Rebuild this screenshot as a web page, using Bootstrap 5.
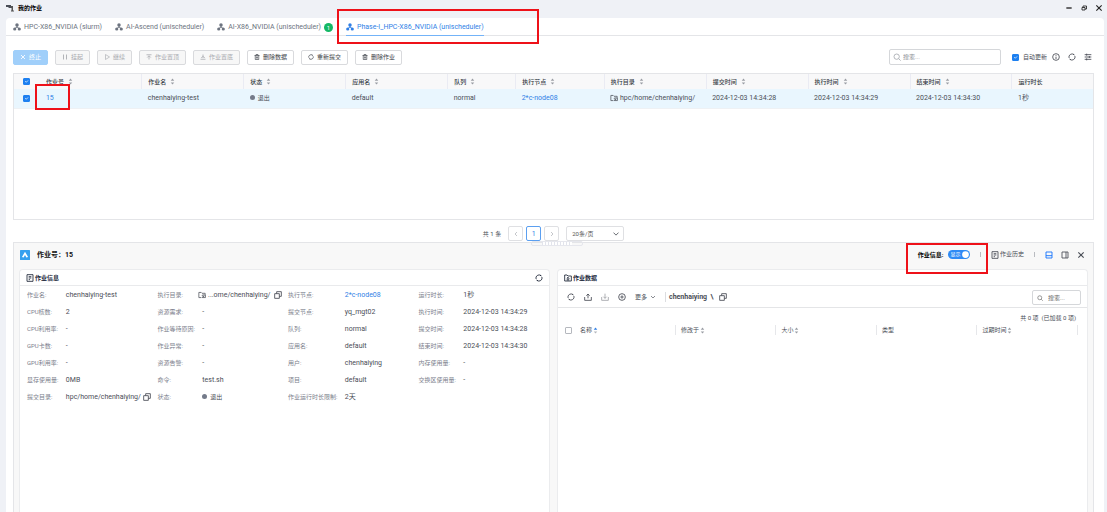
<!DOCTYPE html>
<html lang="zh-CN">
<head>
<meta charset="utf-8">
<meta name="viewport" content="width=device-width, initial-scale=1">
<title>我的作业</title>
<link href="https://cdn.jsdelivr.net/npm/bootstrap@5.3.0/dist/css/bootstrap.min.css" rel="stylesheet">
<style>
:root{--zh:6px;--en:7px;--blue:#2f7fe6;--line:#e4e5e8}
body{background:#eff1f6;font-family:Roboto,"Noto Sans CJK SC",sans-serif;font-size:var(--en);line-height:10px;color:#4a4e57}
button,input,select{font-family:inherit}
svg.ico{width:8px;height:8px;fill:none;stroke:currentColor;stroke-width:1.3;flex:none;display:inline-block;vertical-align:middle}
svg.tiny{width:6px;height:6px}
.zh{font-size:var(--zh)}
a{color:var(--blue);text-decoration:none}
.titlebar{height:18px;padding:0 4px 2px 6px;color:#222}
.titlebar .btn,.plain{padding:0;border:0;line-height:8px;color:inherit;background:none;font-size:var(--zh)}
.shell{margin:0 3px 0 6px;border-radius:4px 4px 0 0;min-height:calc(100vh - 18px)}
.tabs{height:18px;border-bottom:1px solid var(--line);padding-left:7px;gap:13px;flex-wrap:nowrap}
.tabs .nav-link{padding:0;height:18px;display:flex;align-items:center;gap:3px;color:#6d7480;position:relative;white-space:nowrap}
.tabs .nav-link.active{color:var(--blue);border-bottom:1px solid #73b3f8}
.count{background:#14b866;color:#fff;border-radius:50%;width:9px;height:9px;line-height:9px;text-align:center}
.pad{padding:0 10px 0 7px}
.tool{margin-top:13px;gap:7px}
.tool .btn{height:15px;padding:0 6px;border:1px solid #d9dadd;border-radius:2px;font-size:var(--zh);line-height:8px;color:#3b3f47;display:flex;align-items:center;justify-content:center;gap:3px;background:#fff;white-space:nowrap}
.tool .btn.primary{background:#a0cffa;border-color:#a0cffa;color:#fff}
.tool .btn:disabled{opacity:1;background:#f7f7f7;color:#a9abb0}
.tool .btn.primary:disabled{background:#a0cffa;color:#fff}
.acts{margin:0 2px 0 -2px}
.seek{border:1px solid #d5d7da;border-radius:2px;background:#fff;padding:0 3px;gap:2px;color:#a8abb1}
.seek input{border:0;outline:0;padding:0;width:100%;min-width:0;font-size:var(--zh);line-height:10px;background:none}
.seek input::placeholder{color:#8b8e94}
.seek.main{width:112px;height:16px}
.seek.files{width:49px;height:15px;padding:0 4px;gap:5px;color:#666}
.seek.files input::placeholder{color:#666}
.form-check-input.box{width:7px;height:7px;border-radius:1px;margin:0;float:none;border-color:#b5b8be;vertical-align:middle;display:inline-block}
.form-check-input.box:checked{background-color:#1e80f0;border-color:#1e80f0}
.jobs{margin-top:8px;border:1px solid var(--line);height:147px}
.jobs table{table-layout:fixed;margin:0;color:#4a4e57}
.jobs th,.jobs td{padding:0 0 0 6px;vertical-align:middle;white-space:nowrap;border:0;color:inherit}
.jobs thead th{height:15px;background:#f8f8f9;font-size:var(--zh);font-weight:500;border-left:1px solid #eaebf3;line-height:10px;color:#333842}
.jobs thead th:nth-child(-n+2){border-left:0}
.jobs tbody td{height:19px;background:#e9f6fe;border-bottom:1px solid #eef1f4;line-height:10px}
.jobs .sel{padding:0 0 0 9px}
.sort{width:5px!important;height:7px!important;margin-left:4px;fill:#9a9da4!important;stroke:none!important}
.w-sel{width:2.4%}.w-std{width:9.44%}.w-que{width:6.3%}.w-node{width:8.2%}.w-end{width:7.5%}
.dot{display:inline-block;width:5px;height:5px;border-radius:50%;background:#747b8a;margin-right:3px}
.pager{margin-top:6px;height:15px;gap:3px}
.pager .btn{width:15px;height:15px;padding:0;line-height:8px;font-size:var(--en);border:1px solid #dfe0e3;border-radius:2px;color:#a5a8ae;display:flex;align-items:center;justify-content:center}
.pager .btn.on{border-color:#5b9ff0;color:var(--blue)}
.pager .form-select{width:58px;height:15px;font-size:var(--zh);line-height:10px;padding:0 14px 0 5px;border:1px solid #dfe0e3;border-radius:2px;background-size:6px 6px;background-position:right 4px center;color:#555}
.detail{margin-top:1px;border:1px solid var(--line);border-bottom:0;background:#f8f8f8;position:relative;padding:0 5px}
.grip{position:absolute;left:50%;top:-2px;width:52px;height:5px;margin-left:-23px;border:1px solid #e6e7ed;border-radius:2px;background:#fff repeating-linear-gradient(90deg,#e2e4ec 0 1px,#fff 1px 3px) content-box;padding:0 10px}
.detail-head{height:26px;padding:0 3px 3px 1px;color:#4a4e57}
.logo{width:10px;height:10px}
.head-title{font-size:7px;font-weight:700;color:#111;margin-left:7px}
.bar{width:1px;height:5px;background:#b9bbc0}
.detail-head .bar{margin:0 2px}
.toggle{position:relative;width:22px;height:9px}
.toggle .form-check-input{width:22px;height:9px;margin:0;float:none;display:block;border:0;background-color:#9aa0aa}
.toggle .form-check-input:checked{background-color:#2f8bf5}
.toggle span{position:absolute;left:3px;top:0;line-height:9px;font-size:5px;color:#fff;pointer-events:none}
.panes{gap:7px}
.pane{background:#fff;border:1px solid #ebecee;border-bottom:0;border-radius:4px 4px 0 0;flex:1 1 0;min-width:0;min-height:calc(100vh - 269px)}
.pane-head{height:16px;padding:0 6px 0 6px;border-bottom:1px solid #e9eaec;font-size:var(--zh);font-weight:700;color:#222a3b;gap:1px}
.facts{display:grid;grid-template-columns:39fr 92fr 45fr 86fr 57fr 74fr 45fr 86fr;grid-auto-rows:17px;align-items:center;margin:0 0 0 7px;white-space:nowrap}
.facts dt{font-weight:400;font-size:var(--zh);color:#7b808c}
.facts dd{margin:0;min-width:0}
.facts .shift{margin-left:-4px}
.facts .gap-copy{margin-left:2px}
.filebar{height:22px;border-bottom:1px solid #e4e5e7;padding:0 6px 0 9px;gap:9px}
.filebar b{font-weight:700;margin-left:-6px}
.filebar b .ico{margin-left:2px}
.filebar .bar{height:10px;background:#dcdde0}
.total{padding:5px 11px 0 0;text-align:right;font-size:var(--zh);line-height:10px}
.files{table-layout:fixed;width:100%;font-size:var(--zh);margin-top:2px}
.files th{font-weight:400;line-height:10px;padding:0 0 0 5px;border-right:1px solid #e6e7ea;white-space:nowrap}
.files th:first-child{padding-left:7px}
.files .tail{border:0;padding:0;width:1.8%}
.files .sort{margin-left:1px}
.w-name{width:22.2%}.w-col{width:19%}
.mark-box{position:absolute;border:2px solid #ee1119;pointer-events:none;z-index:3}
.mark-tab{left:-9px;top:-9px;width:202px;height:35px}
.mark-id{left:-5px;top:-5px;width:35px;height:26px}
.mark-info{left:-12px;top:-7px;width:82px;height:31px}
</style>
<script src="https://cdn.jsdelivr.net/npm/bootstrap@5.3.0/dist/js/bootstrap.bundle.min.js"></script>
</head>
<body>
<svg class="d-none">
<symbol id="tree" viewBox="0 0 12 12"><g fill="currentColor" stroke="none"><circle cx="6" cy="3" r="2.600"/><circle cx="2.600" cy="9" r="2.400"/><circle cx="9.400" cy="9" r="2.400"/></g><path d="M6 4v3M3 8l3-2 3 2"/></symbol>
<symbol id="sort" viewBox="0 0 8 12"><path d="M1 4.500 4 1l3 3.500zM1 7.500h6L4 11z"/></symbol>
<symbol id="sortup" viewBox="0 0 8 12"><path fill="#2f7fe6" d="M1 4.500 4 1l3 3.500z"/><path fill="#b4b7bd" d="M1 7.500h6L4 11z"/></symbol>
<symbol id="x" viewBox="0 0 12 12"><path stroke-width="1.700" d="m2 2 8 8M10 2l-8 8"/></symbol>
<symbol id="pause" viewBox="0 0 12 12"><path stroke-width="1.800" d="M3 1v10M9 1v10"/></symbol>
<symbol id="play" viewBox="0 0 12 12"><path d="m3 1 8 5-8 5z"/></symbol>
<symbol id="top" viewBox="0 0 12 12"><path stroke-width="1.600" d="M1 1.500h10M6 11V4M2.500 7 6 3.500 9.500 7"/></symbol>
<symbol id="bottom" viewBox="0 0 12 12"><path stroke-width="1.600" d="M1 10.500h10M6 1v7M2.500 8 6 4.500 9.500 8"/></symbol>
<symbol id="trash" viewBox="0 0 12 12"><path d="M1 3h10M4 3V1h4v2M2.500 3v8h7V3M5 5v4M7 5v4"/></symbol>
<symbol id="refresh" viewBox="0 0 12 12"><path d="M1.600 7.500A4.700 4.700 0 0 1 9 2.400M10.400 4.500A4.700 4.700 0 0 1 3 9.600"/><path d="M7.500 1.800 9.800 3M4.500 10.200 2.200 9"/></symbol>
<symbol id="find" viewBox="0 0 12 12"><circle cx="5.500" cy="5.500" r="4"/><path d="m8.500 8.500 3 3"/></symbol>
<symbol id="info" viewBox="0 0 12 12"><circle cx="6" cy="6" r="5"/><path d="M6 5.500V9M6 3v1.200"/></symbol>
<symbol id="sliders" viewBox="0 0 12 12"><path d="M1 2.500h10M1 6h10M1 9.500h10M4 1v3M8 4.500v3M4 8v3"/></symbol>
<symbol id="folder" viewBox="0 0 14 12"><path d="M12.500 5V3H7L5.500 1.500h-4v9H6"/><circle cx="9" cy="7" r="1.500"/><path d="M11 5.500h2v5H7.500L11 8"/></symbol>
<symbol id="copy" viewBox="0 0 12 12"><path d="M1 4h7v7H1zM4 4V1h7v7H8"/></symbol>
<symbol id="doc" viewBox="0 0 12 12"><path d="M1.500 1h9v10h-9zM4 4h4M4 6h4M4 8.500h2"/></symbol>
<symbol id="dir" viewBox="0 0 12 12"><path d="M1 10.500v-9h3.500L6 3h5v7.500zM6 5v4M4 7l2-2 2 2M4 9h4"/></symbol>
<symbol id="up" viewBox="0 0 12 12"><path d="M1 6v5h10V6M6 8V1.500M3.500 4 6 1.500 8.500 4"/></symbol>
<symbol id="down" viewBox="0 0 12 12"><path d="M1 6v5h10V6M6 1v7M3.500 5.500 6 8l2.500-2.500"/></symbol>
<symbol id="target" viewBox="0 0 12 12"><circle cx="6" cy="6" r="5"/><path d="M6 3.500v5M3.500 6h5"/></symbol>
<symbol id="chev" viewBox="0 0 12 12"><path d="m2 4 4 4 4-4"/></symbol>
<symbol id="left" viewBox="0 0 12 12"><path d="M8 2 4 6l4 4"/></symbol>
<symbol id="right" viewBox="0 0 12 12"><path d="m4 2 4 4-4 4"/></symbol>
<symbol id="dock" viewBox="0 0 12 12"><path d="M1.500 1.500h9v9h-9zM1.500 7h9"/></symbol>
<symbol id="side" viewBox="0 0 12 12"><path d="M1.500 1.500h9v9h-9zM7.500 1.500v9"/></symbol>
<symbol id="min" viewBox="0 0 12 12"><path stroke-width="2" d="M2 6h8"/></symbol>
<symbol id="restore" viewBox="0 0 12 12"><path stroke-width="1.700" d="M2 5h6v5H2zM4 5V2h7v6H8"/></symbol>
</svg>

<header class="titlebar d-flex align-items-center">
  <svg class="ico" viewBox="0 0 16 14"><path fill="#4a4e57" stroke="none" d="M0 1h10v4H0zM5 5h8v2H5z"/><path fill="#555" stroke="none" d="M10 3h4v9h2v2h-6v-2h1V6h-1z"/></svg>
  <strong class="zh ms-1 me-auto text-black">我的作业</strong>
  <div class="d-flex gap-2">
    <button class="btn" aria-label="最小化"><svg class="ico"><use href="#min"/></svg></button>
    <button class="btn" aria-label="还原"><svg class="ico tiny"><use href="#restore"/></svg></button>
    <button class="btn" aria-label="关闭窗口"><svg class="ico"><use href="#x"/></svg></button>
  </div>
</header>

<main class="shell bg-white">
  <nav class="nav tabs">
    <a class="nav-link" href="#"><svg class="ico"><use href="#tree"/></svg>HPC-X86_NVIDIA (slurm)</a>
    <a class="nav-link" href="#"><svg class="ico"><use href="#tree"/></svg>AI-Ascend (unischeduler)</a>
    <a class="nav-link" href="#"><svg class="ico"><use href="#tree"/></svg>AI-X86_NVIDIA (unischeduler)<span class="count zh">1</span></a>
    <a class="nav-link active" href="#"><svg class="ico"><use href="#tree"/></svg>Phase-I_HPC-X86_NVIDIA (unischeduler)<span class="mark-box mark-tab"></span></a>
  </nav>

  <div class="pad">
    <div class="tool d-flex align-items-center">
      <button class="btn primary" disabled><svg class="ico tiny"><use href="#x"/></svg>终止</button>
      <button class="btn" disabled><svg class="ico tiny"><use href="#pause"/></svg>挂起</button>
      <button class="btn" disabled><svg class="ico tiny"><use href="#play"/></svg>继续</button>
      <button class="btn" disabled><svg class="ico tiny"><use href="#top"/></svg>作业置顶</button>
      <button class="btn" disabled><svg class="ico tiny"><use href="#bottom"/></svg>作业置底</button>
      <button class="btn"><svg class="ico tiny"><use href="#trash"/></svg>删除数据</button>
      <button class="btn"><svg class="ico tiny"><use href="#refresh"/></svg>重新提交</button>
      <button class="btn"><svg class="ico tiny"><use href="#trash"/></svg>删除作业</button>
      <div class="seek main d-flex align-items-center ms-auto"><svg class="ico"><use href="#find"/></svg><input type="text" placeholder="搜索..." aria-label="搜索作业"></div>
      <div class="d-flex align-items-center ms-1 zh">
        <input class="form-check-input box" type="checkbox" id="auto" checked><label for="auto" class="ms-1">自动更新</label>
      </div>
      <div class="acts d-flex gap-2">
        <button class="plain" aria-label="说明"><svg class="ico"><use href="#info"/></svg></button>
        <button class="plain" aria-label="刷新"><svg class="ico"><use href="#refresh"/></svg></button>
        <button class="plain" aria-label="列设置"><svg class="ico"><use href="#sliders"/></svg></button>
      </div>
    </div>

    <div class="jobs">
      <table class="table">
        <colgroup><col class="w-sel"><col class="w-std"><col class="w-std"><col class="w-std"><col class="w-std"><col class="w-que"><col class="w-node"><col class="w-std"><col class="w-std"><col class="w-std"><col class="w-std"><col class="w-end"></colgroup>
        <thead><tr>
          <th class="sel"><input class="form-check-input box" type="checkbox" checked aria-label="全选"></th>
          <th>作业号<svg class="ico sort"><use href="#sort"/></svg></th>
          <th>作业名<svg class="ico sort"><use href="#sort"/></svg></th>
          <th>状态<svg class="ico sort"><use href="#sort"/></svg></th>
          <th>应用名<svg class="ico sort"><use href="#sort"/></svg></th>
          <th>队列<svg class="ico sort"><use href="#sort"/></svg></th>
          <th>执行节点<svg class="ico sort"><use href="#sort"/></svg></th>
          <th>执行目录<svg class="ico sort"><use href="#sort"/></svg></th>
          <th>提交时间<svg class="ico sort"><use href="#sort"/></svg></th>
          <th>执行时间<svg class="ico sort"><use href="#sort"/></svg></th>
          <th>结束时间<svg class="ico sort"><use href="#sort"/></svg></th>
          <th>运行时长</th>
        </tr></thead>
        <tbody><tr>
          <td class="sel"><input class="form-check-input box" type="checkbox" checked aria-label="选择作业 15"></td>
          <td class="position-relative"><a href="#">15</a><span class="mark-box mark-id"></span></td>
          <td>chenhaiying-test</td>
          <td class="zh"><span class="dot"></span>退出</td>
          <td>default</td>
          <td>normal</td>
          <td><a href="#">2*c-node08</a></td>
          <td><svg class="ico"><use href="#folder"/></svg> hpc/home/chenhaiying/</td>
          <td>2024-12-03 14:34:28</td>
          <td>2024-12-03 14:34:29</td>
          <td>2024-12-03 14:34:30</td>
          <td>1秒</td>
        </tr></tbody>
      </table>
    </div>

    <div class="pager d-flex align-items-center justify-content-center">
      <span class="zh me-1">共 1 条</span>
      <button class="btn" aria-label="上一页"><svg class="ico tiny"><use href="#left"/></svg></button>
      <button class="btn on">1</button>
      <button class="btn" aria-label="下一页"><svg class="ico tiny"><use href="#right"/></svg></button>
      <select class="form-select ms-1" aria-label="每页条数"><option>20条/页</option></select>
    </div>

    <section class="detail">
      <span class="grip"></span>
      <div class="detail-head d-flex align-items-center">
        <svg class="logo" viewBox="0 0 18 18"><rect width="18" height="18" rx="1" fill="#36a0ee"/><path fill="#fff" d="M9 3l5.500 9.500-3 1L9 9l-2.500 4.500-3-1z"/></svg>
        <span class="head-title me-auto">作业号：15</span>
        <div class="d-flex align-items-center gap-2 zh">
          <div class="d-flex align-items-center gap-1 position-relative">
            <label for="showinfo" class="fw-bold text-black">作业信息:</label>
            <div class="toggle form-switch p-0"><input class="form-check-input" type="checkbox" role="switch" id="showinfo" checked><span>显示</span></div>
            <span class="mark-box mark-info"></span>
          </div>
          <span class="bar"></span>
          <button class="plain"><svg class="ico"><use href="#doc"/></svg> 作业历史</button>
          <span class="bar"></span>
          <button class="plain" aria-label="底部停靠"><svg class="ico text-primary"><use href="#dock"/></svg></button>
          <button class="plain" aria-label="右侧停靠"><svg class="ico"><use href="#side"/></svg></button>
          <button class="plain" aria-label="关闭"><svg class="ico"><use href="#x"/></svg></button>
        </div>
      </div>

      <div class="panes d-flex">
        <section class="pane">
          <div class="pane-head d-flex align-items-center"><svg class="ico"><use href="#doc"/></svg><span class="me-auto">作业信息</span><button class="plain" aria-label="刷新信息"><svg class="ico"><use href="#refresh"/></svg></button></div>
          <dl class="facts">
            <dt>作业名:</dt><dd>chenhaiying-test</dd><dt>执行目录:</dt><dd class="shift"><svg class="ico"><use href="#folder"/></svg> ...ome/chenhaiying/ <svg class="ico gap-copy"><use href="#copy"/></svg></dd><dt>执行节点:</dt><dd><a href="#">2*c-node08</a></dd><dt>运行时长:</dt><dd>1秒</dd>
            <dt>CPU核数:</dt><dd>2</dd><dt>资源需求:</dt><dd>-</dd><dt>提交节点:</dt><dd>yq_mgt02</dd><dt>执行时间:</dt><dd>2024-12-03 14:34:29</dd>
            <dt>CPU利用率:</dt><dd>-</dd><dt>作业等待原因:</dt><dd>-</dd><dt>队列:</dt><dd>normal</dd><dt>提交时间:</dt><dd>2024-12-03 14:34:28</dd>
            <dt>GPU卡数:</dt><dd>-</dd><dt>作业异常:</dt><dd>-</dd><dt>应用名:</dt><dd>default</dd><dt>结束时间:</dt><dd>2024-12-03 14:34:30</dd>
            <dt>GPU利用率:</dt><dd>-</dd><dt>资源告警:</dt><dd>-</dd><dt>用户:</dt><dd>chenhaiying</dd><dt>内存使用量:</dt><dd>-</dd>
            <dt>显存使用量:</dt><dd>0MB</dd><dt>命令:</dt><dd>test.sh</dd><dt>项目:</dt><dd>default</dd><dt>交换区使用量:</dt><dd>-</dd>
            <dt>提交目录:</dt><dd>hpc/home/chenhaiying/ <svg class="ico"><use href="#copy"/></svg></dd><dt>状态:</dt><dd class="zh"><span class="dot"></span>退出</dd><dt>作业运行时长限制:</dt><dd>2天</dd>
          </dl>
        </section>

        <section class="pane">
          <div class="pane-head d-flex align-items-center"><svg class="ico"><use href="#dir"/></svg><span>作业数据</span></div>
          <div class="filebar d-flex align-items-center">
            <button class="plain" aria-label="刷新文件"><svg class="ico"><use href="#refresh"/></svg></button>
            <button class="plain" aria-label="上传"><svg class="ico"><use href="#up"/></svg></button>
            <button class="plain opacity-50" aria-label="下载"><svg class="ico"><use href="#down"/></svg></button>
            <button class="plain" aria-label="新建"><svg class="ico"><use href="#target"/></svg></button>
            <button class="plain">更多 &nbsp;<svg class="ico tiny"><use href="#chev"/></svg></button>
            <span class="bar"></span>
            <b>chenhaiying &nbsp;\ &nbsp;<svg class="ico"><use href="#copy"/></svg></b>
            <div class="seek files d-flex align-items-center ms-auto"><svg class="ico tiny"><use href="#find"/></svg><input type="text" placeholder="搜索..." aria-label="搜索文件"></div>
          </div>
          <div class="total">共 0 项 &nbsp;(已加载 0 项)</div>
          <table class="files">
            <thead><tr>
              <th class="w-name"><input class="form-check-input box me-2" type="checkbox" aria-label="全选文件">名称<svg class="ico sort"><use href="#sortup"/></svg></th>
              <th class="w-col">修改于<svg class="ico sort"><use href="#sort"/></svg></th>
              <th class="w-col">大小<svg class="ico sort"><use href="#sort"/></svg></th>
              <th class="w-col">类型</th>
              <th class="w-col">过期时间<svg class="ico sort"><use href="#sort"/></svg></th>
              <td class="tail"></td>
            </tr></thead>
          </table>
        </section>
      </div>
    </section>
  </div>
</main>
</body>
</html>
